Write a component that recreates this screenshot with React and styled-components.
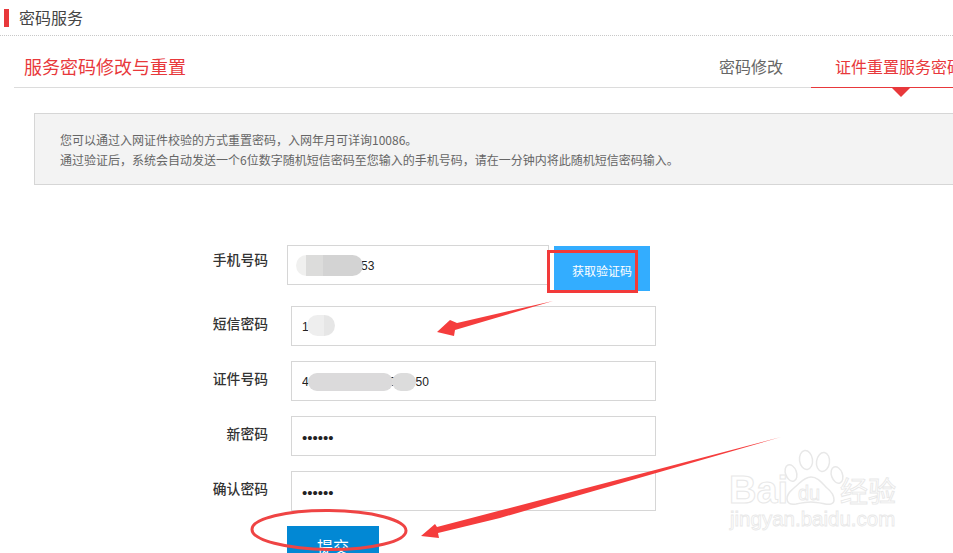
import React from "react";
import styled, { createGlobalStyle } from "styled-components";

const Global = createGlobalStyle`
  html, body { margin: 0; padding: 0; background: #fff; }
  body { font-family: "Noto Sans CJK SC", "Liberation Sans", sans-serif; }
`;

const Page = styled.div`
  position: relative;
  width: 953px;
  height: 553px;
  overflow: hidden;
  background: #fff;
`;

const Header = styled.header`
  display: flex;
  align-items: flex-start;
  height: 35px;
  border-bottom: 1px dotted #c8c8c8;
  padding-left: 4px;
  box-sizing: content-box;
`;

const HeaderMark = styled.span`
  flex: none;
  width: 5px;
  height: 18px;
  margin-top: 9px;
  background: #e8383b;
`;

const HeaderTitle = styled.h2`
  margin: 0 0 0 10px;
  font-size: 16px;
  line-height: 34px;
  font-weight: 400;
  color: #444;
`;

const Section = styled.section`
  width: 977px;
  margin-left: 14px;
`;

const TitleRow = styled.div`
  display: flex;
  align-items: stretch;
  justify-content: space-between;
  height: 51px;
  border-bottom: 1px solid #dcdcdc;
  padding-left: 10px;
`;

const Title = styled.h1`
  margin: 0;
  font-size: 18px;
  line-height: 60px;
  font-weight: 400;
  color: #e8383b;
`;

const Tabs = styled.nav`
  display: flex;
`;

const Tab = styled.a`
  position: relative;
  width: ${(p) => p.$width}px;
  height: 52px;
  box-sizing: border-box;
  padding-left: ${(p) => p.$inset}px;
  white-space: nowrap;
  font-size: 16px;
  line-height: 60px;
  color: ${(p) => (p.$active ? "#e8383b" : "#666")};
  border-bottom: 1px solid ${(p) => (p.$active ? "#e8383b" : "transparent")};

  ${(p) =>
    p.$active &&
    `&::after {
      content: "";
      position: absolute;
      left: 81px;
      top: 52px;
      border-style: solid;
      border-width: 9px 9px 0;
      border-color: #e8383b transparent transparent;
    }`}
`;

const Notice = styled.div`
  width: 960px;
  margin: 25px 0 0 34px;
  padding: 16px 0 14px 25px;
  border: 1px solid #d6d6d6;
  background: #f3f3f3;
  font-size: 12px;
  line-height: 20px;
  color: #666;
`;

const Form = styled.form`
  display: flex;
  flex-direction: column;
  gap: 15px;
  margin-top: 60px;
`;

const Row = styled.div`
  display: flex;
  align-items: flex-start;
`;

const Label = styled.label`
  flex: none;
  width: 268px;
  margin-top: ${(p) => p.$lift}px;
  text-align: right;
  font-size: 13.8px;
  line-height: 40px;
  font-weight: 500;
  color: #333;
`;

const Field = styled.div`
  position: relative;
  flex: none;
  width: ${(p) => p.$width}px;
  margin-left: ${(p) => p.$gap}px;
`;

const Input = styled.input`
  display: block;
  width: 100%;
  height: 40px;
  box-sizing: border-box;
  padding: 2px 0 0 ${(p) => p.$pad}px;
  border: 1px solid #d6d6d6;
  outline: none;
  background: #fff;
  font-family: "Liberation Sans", sans-serif;
  font-size: ${(p) => (p.type === "password" ? 15 : 12)}px;
  color: #222;
`;

const Smudge = styled.span`
  position: absolute;
  left: ${(p) => p.$x}px;
  top: ${(p) => p.$y}px;
  width: ${(p) => p.$w}px;
  height: ${(p) => p.$h}px;
  border-radius: ${(p) => p.$h / 2}px;
  background: ${(p) => p.$fill};
`;

const CodeButton = styled.button`
  flex: none;
  width: 96px;
  height: 45px;
  margin: 1px 0 0 5px;
  padding: 3px 0 0;
  border: 0;
  background: #33adff;
  color: #fff;
  font-family: inherit;
  font-size: 12px;
`;

const Submit = styled.button`
  display: block;
  width: 92px;
  height: 40px;
  margin-left: 287px;
  padding: 0;
  border: 0;
  background: #0288d4;
  color: #fff;
  font-family: inherit;
  font-size: 16px;
`;

const Overlay = styled.svg`
  position: absolute;
  left: 0;
  top: 0;
  pointer-events: none;
`;

const WmText = styled.text`
  font-family: ${(p) => p.$font || '"Liberation Sans", sans-serif'};
  font-size: ${(p) => p.$size}px;
  font-weight: ${(p) => p.$weight || 400};
  fill: #fff;
  stroke: #e8e8e8;
  stroke-width: ${(p) => p.$stroke || 1};
`;

const Annotations = () => (
  <Overlay width="953" height="553" viewBox="0 0 953 553">
    <g fill="#fff" stroke="#e8e8e8" strokeWidth="1.5">
      <ellipse cx="806" cy="460" rx="6.5" ry="9.5" transform="rotate(-8 806 460)" />
      <ellipse cx="823" cy="462" rx="6.5" ry="9.5" transform="rotate(8 823 462)" />
      <ellipse cx="791" cy="473" rx="5.5" ry="8.5" transform="rotate(-20 791 473)" />
      <ellipse cx="837" cy="475" rx="5.5" ry="8.5" transform="rotate(-20 837 475)" />
      <path d="M811 477c7 0 11 6 16 11 5 4 7 7 7 12 0 4-4 5-9 4-5-1-9-2-14-2s-10 1-15 2c-6 1-9-1-9-5 0-6 4-8 8-12 5-4 9-10 16-10z" />
    </g>
    <WmText x="729" y="503" $size="38" $weight="700">Bai</WmText>
    <WmText x="798" y="500" $size="20" $stroke="0.8">du</WmText>
    <WmText x="840" y="502" $size="28" $font='"Noto Sans CJK SC", sans-serif' $stroke="0.9">经验</WmText>
    <WmText x="730" y="526" $size="20.5" $stroke="0.8">jingyan.baidu.com</WmText>

    <rect x="548.5" y="251.5" width="88" height="40" fill="none" stroke="#f23a3a" strokeWidth="3" />
    <polygon points="553,301 457,323 450,320 437,332 454,336 455,330" fill="#f53d3d" />
    <polygon points="781,437 437,527 435,524 421,536 439,538 438,533 500,518" fill="#f53d3d" />
    <ellipse cx="329" cy="530" rx="77" ry="19.5" fill="none" stroke="#ef4444" strokeWidth="3" transform="rotate(0.5 329 530)" />
  </Overlay>
);

export default function App() {
  return (
    <Page>
      <Global />
      <Header>
        <HeaderMark />
        <HeaderTitle>密码服务</HeaderTitle>
      </Header>
      <Section>
        <TitleRow>
          <Title>服务密码修改与重置</Title>
          <Tabs>
            <Tab $width={120} $inset={28}>密码修改</Tab>
            <Tab $width={180} $inset={24} $active>证件重置服务密码</Tab>
          </Tabs>
        </TitleRow>
      </Section>
      <Notice>
        您可以通过入网证件校验的方式重置密码，入网年月可详询10086。
        <br />
        通过验证后，系统会自动发送一个6位数字随机短信密码至您输入的手机号码，请在一分钟内将此随机短信密码输入。
      </Notice>
      <Form>
        <Row>
          <Label $lift={-6}>手机号码</Label>
          <Field $width={262} $gap={19}>
            <Input $pad={13} defaultValue="13800000053" readOnly />
            <Smudge
              $x={9} $y={10} $w={67} $h={21}
              $fill="linear-gradient(90deg,#f0f0ef 0 15%,#dcdcdb 15% 40%,#d3d3d3 40%)"
            />
          </Field>
          <CodeButton type="button">获取验证码</CodeButton>
        </Row>
        <Row>
          <Label $lift={-3}>短信密码</Label>
          <Field $width={365} $gap={23}>
            <Input $pad={10} defaultValue="1" readOnly />
            <Smudge $x={16} $y={9} $w={28} $h={21} $fill="linear-gradient(90deg,#eeeeee 0 60%,#e6e6e6 60%)" />
          </Field>
        </Row>
        <Row>
          <Label $lift={-3}>证件号码</Label>
          <Field $width={365} $gap={23}>
            <Input $pad={10} defaultValue="4300000000000000050" readOnly />
            <Smudge $x={17} $y={12} $w={85} $h={18} $fill="#dbdadb" />
            <Smudge $x={101} $y={12} $w={24} $h={18} $fill="#dcdcdc" />
          </Field>
        </Row>
        <Row>
          <Label $lift={-3}>新密码</Label>
          <Field $width={365} $gap={23}>
            <Input $pad={10} type="password" defaultValue="123456" readOnly />
          </Field>
        </Row>
        <Row>
          <Label $lift={-3}>确认密码</Label>
          <Field $width={365} $gap={23}>
            <Input $pad={10} type="password" defaultValue="123456" readOnly />
          </Field>
        </Row>
        <Submit type="button">提交</Submit>
      </Form>
      <Annotations />
    </Page>
  );
}
